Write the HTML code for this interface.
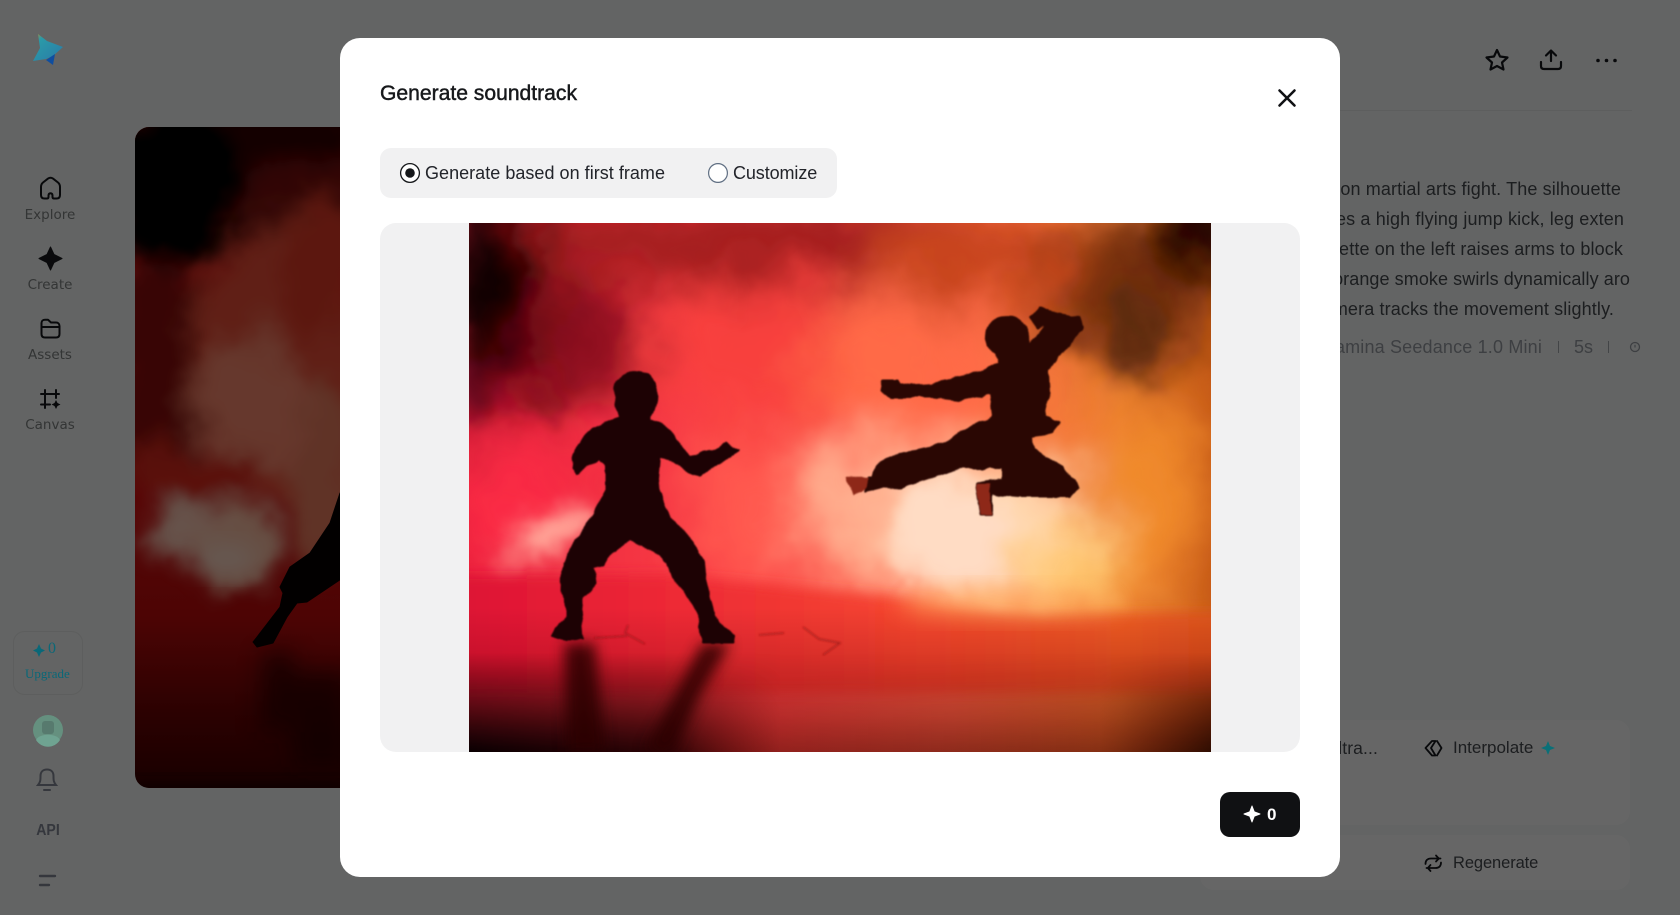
<!DOCTYPE html>
<html><head><meta charset="utf-8"><style>
*{box-sizing:border-box}
html,body{margin:0;width:1680px;height:915px;overflow:hidden;background:#f8fbfa;font-family:"Liberation Sans",sans-serif}
.a{position:absolute;white-space:nowrap}
.nav{font:13.5px "DejaVu Sans",sans-serif;color:#808484;width:100px;text-align:center;left:0;line-height:16px}
.d{font-size:18px;letter-spacing:.13px;color:#484b50;line-height:30px;right:50px}
#ov{position:absolute;inset:0;background:rgba(0,0,0,.6)}
#m{position:absolute;left:340px;top:38px;width:1000px;height:839px;background:#fff;border-radius:20px}
</style></head><body>
<svg width="0" height="0" style="position:absolute">
<defs>
<filter id="sm" x="-10%" y="-10%" width="120%" height="120%" color-interpolation-filters="sRGB"><feTurbulence type="fractalNoise" baseFrequency=".016" numOctaves="5" seed="7" result="n"/><feDisplacementMap in="SourceGraphic" in2="n" scale="56" xChannelSelector="R" yChannelSelector="G"/><feGaussianBlur stdDeviation="2"/></filter>
<filter id="org" x="-5%" y="-5%" width="110%" height="110%" color-interpolation-filters="sRGB"><feTurbulence type="fractalNoise" baseFrequency=".07" numOctaves="2" seed="3" result="n"/><feDisplacementMap in="SourceGraphic" in2="n" scale="6" xChannelSelector="R" yChannelSelector="G"/><feGaussianBlur stdDeviation=".9"/></filter>
<filter id="b25" x="-50%" y="-50%" width="200%" height="200%"><feGaussianBlur stdDeviation="25"/></filter>
<filter id="b12" x="-50%" y="-50%" width="200%" height="200%"><feGaussianBlur stdDeviation="12"/></filter>
<filter id="b7" x="-50%" y="-50%" width="200%" height="200%"><feGaussianBlur stdDeviation="7"/></filter>
<filter id="b5" x="-20%" y="-20%" width="140%" height="140%"><feGaussianBlur stdDeviation="6"/></filter>
<filter id="b1" x="-5%" y="-5%" width="110%" height="110%"><feGaussianBlur stdDeviation="1"/></filter>
<linearGradient id="base" x1="0" x2="1" y1="0" y2="0"><stop offset="0" stop-color="#e8203c"/><stop offset=".35" stop-color="#fb4248"/><stop offset=".65" stop-color="#ff6c4c"/><stop offset=".88" stop-color="#ee8030"/><stop offset="1" stop-color="#c85c18"/></linearGradient>
<linearGradient id="hz" x1="0" x2="1" y1="0" y2="0"><stop offset="0" stop-color="#dc1034"/><stop offset=".3" stop-color="#ee2a36"/><stop offset=".6" stop-color="#f5482e"/><stop offset=".85" stop-color="#ee5c24"/><stop offset="1" stop-color="#d8541c"/></linearGradient>
<linearGradient id="fl" x1="0" x2="0" y1="0" y2="1"><stop offset="0" stop-color="#7a0008" stop-opacity="0"/><stop offset=".45" stop-color="#7a0008" stop-opacity=".28"/><stop offset=".75" stop-color="#6a0606" stop-opacity=".42"/><stop offset="1" stop-color="#5a0a06" stop-opacity=".6"/></linearGradient>
<linearGradient id="dk" x1="0" x2="1" y1="0" y2="0"><stop offset="0" stop-color="#0a0002" stop-opacity="1"/><stop offset=".27" stop-color="#1a0002" stop-opacity=".85"/><stop offset=".42" stop-color="#400200" stop-opacity=".1"/><stop offset=".85" stop-color="#400c00" stop-opacity=".2"/><stop offset="1" stop-color="#200800" stop-opacity=".85"/></linearGradient>
<linearGradient id="dkv" x1="0" x2="0" y1="0" y2="1"><stop offset="0" stop-color="#000"/><stop offset="1" stop-color="#fff"/></linearGradient>
<mask id="mk" maskUnits="userSpaceOnUse" x="0" y="0" width="742" height="529"><rect y="430" width="742" height="99" fill="url(#dkv)"/></mask>
<symbol id="pic" viewBox="0 0 742 529" preserveAspectRatio="none">
<rect width="742" height="529" fill="url(#base)"/>
<g filter="url(#sm)"><g filter="url(#b25)">
<ellipse cx="300" cy="20" rx="300" ry="45" fill="#a01c1e"/>
<ellipse cx="520" cy="40" rx="120" ry="45" fill="#c8441e"/>
<ellipse cx="665" cy="70" rx="85" ry="80" fill="#7a3210"/>
<ellipse cx="735" cy="15" rx="55" ry="50" fill="#180400"/>
<ellipse cx="300" cy="130" rx="120" ry="70" fill="#f8403e"/>
<ellipse cx="100" cy="120" rx="75" ry="60" fill="#8a0a1a"/>
<ellipse cx="22" cy="60" rx="55" ry="95" fill="#0a0002"/>
<ellipse cx="8" cy="175" rx="22" ry="50" fill="#300008"/>
<ellipse cx="50" cy="280" rx="70" ry="60" fill="#fa2a44"/>
<ellipse cx="430" cy="140" rx="90" ry="70" fill="#ff6a46"/>
<ellipse cx="420" cy="290" rx="110" ry="75" fill="#ffb090"/>
<ellipse cx="530" cy="310" rx="100" ry="75" fill="#ffd8b0"/>
<ellipse cx="610" cy="345" rx="55" ry="42" fill="#ffca70"/>
<ellipse cx="680" cy="280" rx="50" ry="90" fill="#f08a2c"/>
<ellipse cx="280" cy="280" rx="60" ry="70" fill="#ff5a50"/>
</g>
<g filter="url(#b12)">
<path d="M20 345 70 290 110 270 125 305 90 345Z" fill="#ffa094"/>
<ellipse cx="480" cy="310" rx="60" ry="60" fill="#ffdcc4"/>
<ellipse cx="600" cy="110" rx="30" ry="24" fill="#8a3a14"/>
<ellipse cx="672" cy="110" rx="22" ry="42" fill="#5c2a0c"/>
<ellipse cx="60" cy="170" rx="26" ry="20" fill="#8a0c1e"/>
</g></g>
<path d="M-30 352H200L400 372 560 392 772 388V470H-30Z" fill="url(#hz)" filter="url(#b5)"/>
<ellipse cx="540" cy="380" rx="110" ry="14" fill="#ffb060" opacity=".7" filter="url(#b12)"/>
<rect y="385" width="742" height="144" fill="url(#fl)"/>
<rect y="430" width="742" height="99" fill="url(#dk)" mask="url(#mk)"/>
<g filter="url(#b7)" fill="#2a0004" opacity=".85">
<path d="M95 420H126L136 529H98Z"/>
<path d="M233 420H262L232 470 205 529H175Z"/>
</g>
<g filter="url(#org)" stroke-linejoin="round" stroke-width="3">
<path fill="#1d0204" stroke="#1d0204" d="M166 150C179 150 187 158 187 170 187 182 183 190 181 196L198 207C208 216 215 228 221 233L248 228 257 221 269 227 258 234 231 253 221 249 204 237 190 232 188 257 189 267 198 290 223 320 233 338 234 350 244 390 248 400 264 412 263 419H234L231 394 218 370 204 354 199 340 181 324 161 317 148 324 134 340 124 344 126 360 114 374 111 390 113 416H89L83 412 98 394 98 377 93 367 94 344 102 327 118 304 138 267 138 240 131 234 108 249 104 244C106 228 113 214 124 207L151 195C149 190 147 180 147 170 147 158 155 150 166 150Z"/>
<path fill="#2a0703" stroke="#2a0703" d="M538 94C550 94 558 102 558 114L561 124 581 98 569 105 562 95 571 85 588 91 610 95 613 104 603 120 588 134 579 147 580 170 574 194 579 196 590 200 583 209 563 213 564 227 593 244 608 264 600 273H551L523 271V291H512L507 261 534 257V244H491L431 264 416 263 396 268 400 254 404 254 407 244 431 231 464 225 504 205 524 194 521 170 491 176 464 173H424L412 168 414 158H428L431 163 464 161 501 153 531 140 528 130C521 125 518 118 518 112 518 102 526 94 538 94Z"/>
<path fill="#8e2818" stroke="#8e2818" stroke-width="1.500" d="M378 255H399L395 266 385 271ZM507 262H521L523 291H512Z"/>
</g>
<g fill="none" stroke="#8e1414" stroke-width="1.200" filter="url(#b1)" opacity=".8">
<path d="M159 402 156 410 176 421"/><path d="M334 404 350 416 371 420 354 432"/><path d="M290 412 315 410"/><path d="M125 415 158 413"/>
</g>
</symbol>
<filter id="sm2" x="-10%" y="-10%" width="120%" height="120%" color-interpolation-filters="sRGB"><feTurbulence type="fractalNoise" baseFrequency=".014" numOctaves="5" seed="21" result="n"/><feDisplacementMap in="SourceGraphic" in2="n" scale="55" xChannelSelector="R" yChannelSelector="G"/><feGaussianBlur stdDeviation="2"/></filter>
<linearGradient id="bgf" x1="0" x2="0" y1="0" y2="1"><stop offset="0" stop-color="#ff2a24"/><stop offset=".4" stop-color="#f01414"/><stop offset=".74" stop-color="#c00c0c"/><stop offset=".88" stop-color="#700404"/><stop offset="1" stop-color="#3c0000"/></linearGradient>
<linearGradient id="lg" x1="0" y1="0" x2="1" y2="1"><stop offset="0" stop-color="#c88a20"/><stop offset=".22" stop-color="#2a9aa8"/><stop offset=".75" stop-color="#2a84a8"/><stop offset="1" stop-color="#1a6aa8"/></linearGradient>
</defs></svg>

<!-- page behind -->
<svg class="a" style="left:0;top:0" width="100" height="915" viewBox="0 0 100 915">
<g fill="none" stroke="#16181c" stroke-width="2" stroke-linejoin="round" stroke-linecap="round">
<path d="M41 195V187C41 185 41.800 183.500 43 182.500L48 178.600C49.500 177.600 51.500 177.600 53 178.600L58 182.500C59.200 183.500 60 185 60 187V195C60 197.500 58.800 198.500 56.500 198.500H54C53 198.500 52.500 198 52.500 197V195.500C52.500 194 51.700 193.200 50.500 193.200S48.500 194 48.500 195.500V197C48.500 198 48 198.500 47 198.500H44.500C42.200 198.500 41 197.500 41 195Z"/>
<path d="M41.500 323V334C41.500 336.500 43 337.500 45 337.500H56C58 337.500 59.500 336.500 59.500 334V326C59.500 323.800 58 322.500 56 322.500H51L48 319.800H45C43 319.800 41.500 321 41.500 323ZM42 327H59"/>
<path d="M45 390V408M41 394H59M56 390V398M41 404.500H50"/>
</g>
<path d="M50.500 247 54 254.500 62 258.500 54 262.500 50.500 270 47 262.500 39 258.500 47 254.500Z" fill="#191b1f" stroke="#191b1f" stroke-width="1" stroke-linejoin="round"/>
<path d="M56 400 57.500 403 60.500 404.500 57.500 406 56 409 54.500 406 51.500 404.500 54.500 403Z" fill="#16181c"/>
<rect x="13.500" y="631.500" width="69" height="63" rx="11" fill="none" stroke="#e8ebea"/>
<g fill="none" stroke="#848b98" stroke-width="2" stroke-linecap="round">
<path d="M38 785H56C53.500 782 53.500 780 53.500 776 53.500 772 51 769.500 47 769.500S40.500 772 40.500 776C40.500 780 40.500 782 38 785Z"/>
<path d="M44 790H50"/>
<path d="M40 876H55M40 885H49" stroke-width="2.400"/>
</g>
</svg>
<div class="a nav" style="top:207px">Explore</div>
<div class="a nav" style="top:277px">Create</div>
<div class="a nav" style="top:347px">Assets</div>
<div class="a nav" style="top:417px">Canvas</div>
<div class="a" style="left:0;width:96px;text-align:center;top:822px;font:bold 16px 'Liberation Sans',sans-serif;color:#848b98;transform:scaleX(.88)">API</div>

<!-- background video frame -->
<div class="a" style="left:135px;top:127px;width:210px;height:661px;border-radius:14px 0 0 14px;overflow:hidden">
<svg width="210" height="661" viewBox="0 0 210 661" style="display:block">
<rect width="210" height="661" fill="url(#bgf)"/>
<g filter="url(#sm2)"><g filter="url(#b12)">
<rect x="-30" y="-30" width="290" height="130" fill="#7a0808"/>
<ellipse cx="130" cy="5" rx="110" ry="40" fill="#300200"/>
<ellipse cx="40" cy="55" rx="70" ry="85" fill="#000"/>
<ellipse cx="25" cy="240" rx="50" ry="110" fill="#8c0808"/>
<ellipse cx="150" cy="235" rx="95" ry="145" fill="#f05038"/>
<ellipse cx="185" cy="140" rx="40" ry="70" fill="#e63a26"/>
<ellipse cx="120" cy="275" rx="55" ry="70" fill="#ff8c70"/>
<ellipse cx="60" cy="350" rx="60" ry="30" fill="#e02a1c"/>
<ellipse cx="100" cy="420" rx="50" ry="40" fill="#ffc4a8"/>
<ellipse cx="45" cy="405" rx="35" ry="26" fill="#ffd0bc"/>
<ellipse cx="190" cy="350" rx="35" ry="95" fill="#f08060"/>
</g></g>
<g filter="url(#b12)"><ellipse cx="92" cy="432" rx="28" ry="14" fill="#ffe0d0"/></g>
<rect x="-10" y="660" width="230" height="30" fill="#1e0000" filter="url(#b12)"/>
<g filter="url(#b12)" fill="#220000" opacity=".7">
<path d="M128 525H160L150 605H125Z"/><path d="M150 545H215V640H160Z"/>
</g>
<path fill="#070000" stroke="#070000" stroke-width="1" stroke-linejoin="round" d="M118 515 122 510 145 480 148 466 145 460 155 440 175 426 195 396 205 366H215V446L172 475 162 476 152 490 138 516 122 520Z"/>
</svg></div>

<svg class="a" style="left:1470px;top:40px" width="170" height="40" viewBox="1470 40 170 40">
<g fill="none" stroke="#16181c" stroke-width="2.200" stroke-linejoin="round" stroke-linecap="round">
<path d="M1497 50 1500 56.500 1507.500 57.500 1502 62.500 1503.500 69.500 1497 66 1490.500 69.500 1492 62.500 1486.500 57.500 1494 56.500Z"/>
<path d="M1551 61V51M1546 55.500 1551 50.500 1556 55.500M1541 62V66C1541 68 1542 69 1544 69H1558C1560 69 1561 68 1561 66V62"/>
</g>
<circle cx="1598" cy="60.500" r="1.800" fill="#16181c"/><circle cx="1606.500" cy="60.500" r="1.800" fill="#16181c"/><circle cx="1615" cy="60.500" r="1.800" fill="#16181c"/>
</svg>
<div class="a" style="left:1200px;top:110px;width:432px;height:1px;background:#e8ebea"></div>
<div class="a d" style="top:174px;right:59px">on martial arts fight. The silhouette</div>
<div class="a d" style="top:204px;right:56px">es a high flying jump kick, leg exten</div>
<div class="a d" style="top:234px;right:57px">ette on the left raises arms to block</div>
<div class="a d" style="top:264px;right:50px;letter-spacing:.08px">orange smoke swirls dynamically aro</div>
<div class="a d" style="top:294px;right:66px">mera tracks the movement slightly.</div>
<div class="a" style="top:337px;right:138px;font-size:18px;letter-spacing:.17px;color:#9a9ea6;line-height:20px">eamina Seedance 1.0 Mini</div>
<div class="a" style="left:1558px;top:341px;width:1px;height:12px;background:#a8acb2"></div>
<div class="a" style="left:1574px;top:337px;font-size:18px;color:#9a9ea6;line-height:20px">5s</div>
<div class="a" style="left:1608px;top:341px;width:1px;height:12px;background:#a8acb2"></div>
<svg class="a" style="left:1628px;top:340px" width="14" height="14"><circle cx="7" cy="7" r="4.500" fill="none" stroke="#9a9ea6" stroke-width="1.300"/><path d="M7 4.800V7.500" stroke="#9a9ea6" stroke-width="1.200"/></svg>

<div class="a" style="left:1200px;top:720px;width:430px;height:105px;border-radius:14px;background:#fff"></div>
<div class="a" style="left:1200px;top:835px;width:430px;height:55px;border-radius:14px;background:#fff"></div>
<div class="a d" style="top:733px;right:302px;font-size:17.500px">dtra...</div>
<div class="a d" style="top:733px;left:1453px;right:auto;font-size:17px;letter-spacing:0">Interpolate</div>
<div class="a d" style="top:848px;left:1453px;right:auto;font-size:16.500px;letter-spacing:-.1px">Regenerate</div>
<svg class="a" style="left:1420px;top:735px" width="145" height="145" viewBox="1420 735 145 145">
<g fill="none" stroke="#16181c" stroke-width="1.800" stroke-linejoin="round" stroke-linecap="round">
<path d="M1432 741 1425.500 748 1432 755.500H1435.500L1431 748 1435.500 741ZM1437 741 1441.500 748 1437 755.500"/>
<path d="M1425.500 864C1425.500 860.500 1427.500 858.500 1431 858.500H1440.500M1436 855.500 1438.800 858.500 1436 861.500M1441 862.500C1441 866 1439 868 1435.500 868H1426.500M1430.500 865 1427.800 868 1430.500 871"/>
</g>
</svg>

<div id="ov"></div>

<!-- saturated accents, painted at their final tone -->
<svg class="a" style="left:0;top:0" width="100" height="760" viewBox="0 0 100 760">
<path d="M38 34 47 41 63 47 53 56 46 59 33 61 40 48Z" fill="url(#lg)"/>
<path d="M46 60 55 54 53 65Z" fill="#0f4ea0"/>
<path d="M39 644 41 648.500 45 650.500 41 652.500 39 657 37 652.500 33 650.500 37 648.500Z" fill="#0a6878"/>
<circle cx="48" cy="730" r="15" fill="#65907f"/>
<rect x="42" y="721" width="12" height="13" rx="3" fill="#577a6e"/>
<path d="M36 740C39 733 57 733 60 740 54 749 42 749 36 740Z" fill="#6fa391"/>
</svg>
<div class="a" style="left:48px;top:640px;font:16px 'Liberation Serif',serif;color:#0a6878">0</div>
<div class="a" style="left:25px;top:666px;font:13px 'Liberation Serif',serif;color:#0a6878;width:44px;text-align:center">Upgrade</div>
<svg class="a" style="left:1540px;top:740px" width="16" height="16" viewBox="1540 740 16 16"><path d="M1548 741 1550 746 1555 748 1550 750 1548 755 1546 750 1541 748 1546 746Z" fill="#0a7078"/></svg>

<div id="m">
<div class="a" style="left:40px;top:43px;font-size:21.100px;line-height:26px;color:#16181b;-webkit-text-stroke:.45px #16181b">Generate soundtrack</div>
<svg class="a" style="left:935px;top:48px" width="24" height="24"><path d="M4.500 4.500 19.500 19.500M19.500 4.500 4.500 19.500" stroke="#101114" stroke-width="2.600" stroke-linecap="round"/></svg>
<div class="a" style="left:40px;top:110px;width:457px;height:50px;background:#f1f1f2;border-radius:11px"></div>
<svg class="a" style="left:59px;top:124px" width="370" height="22"><circle cx="11" cy="11" r="9.400" fill="#fff" stroke="#15171a" stroke-width="1.300"/><circle cx="11" cy="11" r="4.800" fill="#15171a"/><circle cx="319" cy="11" r="9.400" fill="#fff" stroke="#5f6e82" stroke-width="1.200"/></svg>
<div class="a" style="left:85px;top:123px;font-size:18px;line-height:24px;letter-spacing:.03px;color:#22242a">Generate based on first frame</div>
<div class="a" style="left:393px;top:123px;font-size:18px;line-height:24px;letter-spacing:-.1px;color:#22242a">Customize</div>
<div class="a" style="left:40px;top:185px;width:920px;height:529px;background:#f1f1f2;border-radius:16px"></div>
<svg class="a" style="left:129px;top:185px" width="742" height="529"><use href="#pic" width="742" height="529"/></svg>
<div class="a" style="left:880px;top:754px;width:80px;height:45px;background:#101113;border-radius:10px"></div>
<svg class="a" style="left:902px;top:766px" width="20" height="20"><path d="M10 2 12.200 7.800 18 10 12.200 12.200 10 18 7.800 12.200 2 10 7.800 7.800Z" fill="#fff" stroke="#fff" stroke-linejoin="round"/></svg>
<div class="a" style="left:927px;top:766px;font:bold 17px/22px 'Liberation Sans',sans-serif;color:#fff">0</div>
</div>
</body></html>
